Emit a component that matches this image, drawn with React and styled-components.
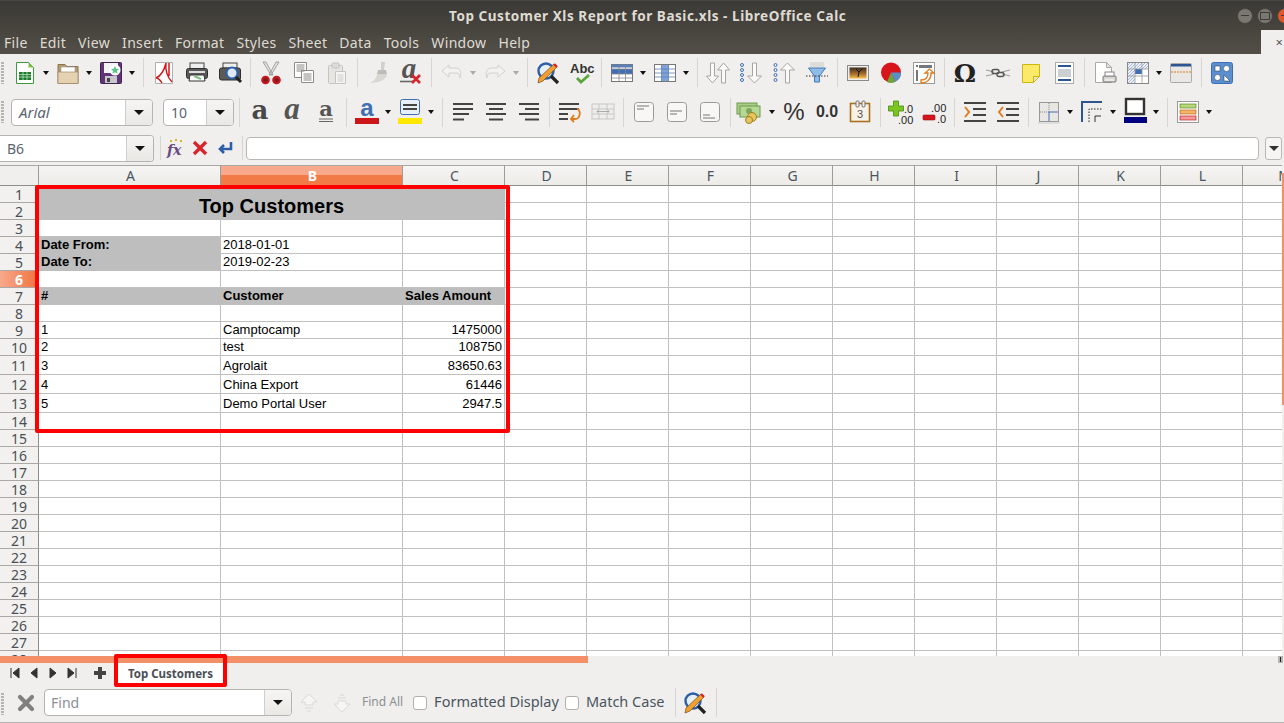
import React from "react";
import styled, { createGlobalStyle } from "styled-components";

const GlobalStyle = createGlobalStyle`
  html, body { margin: 0; padding: 0; background: #f0efed; }
  * { box-sizing: border-box; }
`;

const UI_FONT = `"Noto Sans", "Open Sans", sans-serif`;
const CELL_FONT = `"Liberation Sans", Arial, sans-serif`;

const Window = styled.div`
  position: relative;
  width: 1284px;
  height: 723px;
  overflow: hidden;
  display: flex;
  flex-direction: column;
  font-family: ${UI_FONT};
  background: #f0efed;
`;

const TitleBar = styled.div`
  height: 30px;
  flex: none;
  display: flex;
  align-items: center;
  padding-left: 449px;
  background: linear-gradient(#3a3935, #48453f);
  border-top: 1px solid #4a4843;
  overflow: hidden;
`;

const Title = styled.div`
  font-size: 13.5px;
  font-weight: 700;
  color: #dfdbd2;
  white-space: nowrap;
  letter-spacing: 0.55px;
`;

const WinControls = styled.div`
  margin-left: auto;
  margin-right: -9px;
  display: flex;
  gap: 4px;
`;

const WinButton = styled.div`
  width: 16px;
  height: 16px;
  border-radius: 50%;
  background: ${(p) => (p.$close ? "#e0582a" : "#7a7771")};
  border: 1px solid #45433e;
  display: flex;
  align-items: center;
  justify-content: center;
  &::after {
    content: "";
    width: 8px;
    height: ${(p) => (p.$box ? "6px" : "0")};
    border: 1px solid #3b3a36;
    border-width: ${(p) => (p.$box ? "1px" : "1px 0 0")};
  }
`;

const MenuBar = styled.div`
  height: 24px;
  flex: none;
  display: flex;
  align-items: center;
  background: linear-gradient(#48453f, #534f48);
  padding-left: 4px;
  gap: 12px;
`;

const MenuItem = styled.span`
  font-size: 14px;
  color: #dfdbd2;
  letter-spacing: 0.33px;
`;

const CloseDoc = styled.div`
  margin-left: auto;
  width: 23px;
  height: 24px;
  background: #f0efed;
  color: #555;
  font-size: 13px;
  text-align: right;
  padding-right: 1px;
  line-height: 24px;
`;

const Toolbar = styled.div`
  height: ${(p) => p.$h}px;
  flex: none;
  position: relative;
  display: flex;
  align-items: center;
  padding: 0 0 ${(p) => p.$bottom ?? 0}px ${(p) => p.$pad ?? 8}px;
`;

const Grip = styled.div`
  position: absolute;
  left: 1px;
  top: 50%;
  transform: translateY(-50%);
  width: 3px;
  height: 22px;
  background: repeating-linear-gradient(#b5b4b1 0 2px, transparent 2px 3px);
`;

const ToolButton = styled.div`
  width: ${(p) => p.$w ?? 33}px;
  height: 26px;
  flex: none;
  display: flex;
  align-items: center;
  justify-content: center;
  svg { display: block; overflow: visible; }
`;

const Arrow = styled.div`
  width: 10px;
  flex: none;
  display: flex;
  justify-content: center;
  &::after {
    content: "";
    border: 3.5px solid transparent;
    border-top: 4px solid ${(p) => (p.$faded ? "#aaa" : "#111")};
    border-bottom: 0;
  }
`;

const Sep = styled.div`
  width: 1px;
  height: ${(p) => p.$h ?? 29}px;
  flex: none;
  margin: 0 3px 0 ${(p) => p.$ml ?? 4}px;
  background: #d6d5d2;
  ${Arrow} + & { margin-left: 6px; }
`;

const Combo = styled.div`
  height: ${(p) => p.$h || 27}px;
  width: ${(p) => p.$w}px;
  flex: none;
  margin: ${(p) => p.$m || "0"};
  display: flex;
  background: #fff;
  border: 1px solid #b5b4b1;
  border-radius: 4px;
  ${(p) => p.$flush && "border-left: 0; border-radius: 0 4px 4px 0;"}
  overflow: hidden;
`;

const ComboText = styled.div`
  flex: 1;
  padding-left: ${(p) => p.$pad || 7}px;
  font-size: ${(p) => p.$size || 14}px;
  line-height: 25px;
  color: ${(p) => p.$color || "#5a6470"};
  font-style: ${(p) => (p.$italic ? "italic" : "normal")};
`;

const ComboButton = styled.div`
  width: 27px;
  flex: none;
  display: flex;
  align-items: center;
  justify-content: center;
  border-left: 1px solid #cfcecb;
  background: linear-gradient(#f6f5f3, #e9e8e5);
  &::after {
    content: "";
    border: 5px solid transparent;
    border-top: 5px solid #111;
    border-bottom: 0;
  }
`;

const FormulaInput = styled.div`
  width: 1013px;
  height: 23px;
  flex: none;
  background: #fff;
  border: 1px solid #b9b8b5;
  border-radius: 4px;
`;

const FormulaDrop = styled.div`
  width: 17px;
  height: 23px;
  flex: none;
  margin-left: 6px;
  display: flex;
  align-items: center;
  justify-content: center;
  background: #f6f5f3;
  border: 1px solid #b9b8b5;
  border-radius: 3px;
  &::after {
    content: "";
    border: 5px solid transparent;
    border-top: 5px solid #333;
    border-bottom: 0;
  }
`;

const SheetArea = styled.div`
  position: relative;
  height: 491px;
  flex: none;
  display: flex;
  overflow: hidden;
  background: #fff;
`;

const Grid = styled.div`
  width: 1282px;
  flex: none;
  display: grid;
  grid-template-columns: 39px 182px 182px 102px repeat(10, 82px);
  grid-template-rows: ${(p) => p.$rows};
  overflow: hidden;
`;

const ColHead = styled.div`
  display: flex;
  align-items: center;
  justify-content: center;
  padding-left: 2px;
  font-size: 14px;
  color: ${(p) => (p.$active ? "#fff" : "#4a5560")};
  font-weight: ${(p) => (p.$active ? 700 : 400)};
  border-top: 1px solid #a9a8a5;
  border-bottom: 1px solid #8f8e8b;
  border-right: 1px solid #9c9b98;
  background: ${(p) =>
    p.$active
      ? "linear-gradient(#f8a98c 0 50%, #f27a47 50%)"
      : "linear-gradient(#f6f5f3, #ecebe8)"};
`;

const Corner = styled(ColHead)`
  background: #f0efed;
`;

const RowHead = styled.div`
  display: flex;
  align-items: center;
  justify-content: center;
  font-size: 14px;
  color: ${(p) => (p.$active ? "#fff" : "#4a4f55")};
  font-weight: ${(p) => (p.$active ? 700 : 400)};
  border-right: 1px solid #8f8e8b;
  border-bottom: 1px solid #a9a8a5;
  background: ${(p) =>
    p.$active ? "linear-gradient(90deg, #f8a98c, #f0743f)" : "#f2f1ef"};
`;

const Cell = styled.div`
  display: flex;
  align-items: flex-end;
  justify-content: ${(p) => (p.$right ? "flex-end" : "flex-start")};
  padding: 0 2px 1px 2px;
  font-family: ${CELL_FONT};
  font-size: 13px;
  font-weight: ${(p) => (p.$bold ? 700 : 400)};
  color: #000;
  white-space: nowrap;
  background: ${(p) => (p.$gray ? "#bebebe" : "#fff")};
  border-right: 1px solid ${(p) => (p.$gray ? "#bebebe" : "#c0c0c0")};
  border-bottom: 1px solid ${(p) => (p.$gray ? "#bebebe" : "#c0c0c0")};
`;

const TitleCell = styled(Cell)`
  grid-column: span 3;
  grid-row: span 2;
  justify-content: center;
  font-size: 20px;
  font-weight: 700;
  background: #bebebe;
  border-color: #bebebe;
`;

const RedFrame = styled.div`
  position: absolute;
  left: 35px;
  top: 20px;
  width: 475px;
  height: 248px;
  border: 4px solid #fe0000;
  border-radius: 2px;
`;

const VScroll = styled.div`
  width: 2px;
  flex: none;
  background: #f0efed;
`;

const VThumb = styled.div`
  margin-top: 8px;
  height: 232px;
  background: #f39068;
`;

const SheetBar = styled.div`
  position: relative;
  height: 30px;
  flex: none;
  display: flex;
  flex-direction: column;
`;

const HScroll = styled.div`
  height: 7px;
  flex: none;
  display: flex;
  justify-content: space-between;
  padding-right: 1px;
`;

const HThumb = styled.div`
  width: 588px;
  background: #f39068;
`;

const SplitHandle = styled.div`
  width: 5px;
  height: 7px;
  background: #b5b4b1;
  display: flex;
  justify-content: center;
  &::after {
    content: "";
    width: 1px;
    height: 5px;
    margin-top: 1px;
    background: #222;
  }
`;

const TabRow = styled.div`
  flex: 1;
  display: flex;
  align-items: center;
  padding-left: 5px;
`;

const NavButton = styled.div`
  width: 19px;
  flex: none;
  display: flex;
  justify-content: center;
  margin: 0 0 3px ${(p) => p.$ml || 0}px;
  svg { display: block; }
`;

const Tab = styled.div`
  width: 107px;
  height: 20px;
  margin: 0 0 3px 8px;
  flex: none;
  display: flex;
  align-items: center;
  justify-content: center;
  background: #fff;
  font-size: 11.5px;
  font-weight: 700;
  color: #4a4f55;
`;

const TabFrame = styled.div`
  position: absolute;
  left: 114px;
  top: -2px;
  width: 113px;
  height: 33px;
  border: 4px solid #fe0000;
  border-radius: 2px;
`;

const FindAll = styled.span`
  font-size: 12px;
  color: #8a8f94;
  margin: 0 10px 2px 4px;
`;

const Check = styled.span`
  width: 14px;
  height: 14px;
  flex: none;
  background: #fff;
  border: 1px solid #b0afac;
  border-radius: 3px;
`;

const CheckLabel = styled.span`
  font-size: 14.5px;
  color: #4a5560;
  margin: 0 6px 3px 7px;
  white-space: nowrap;
`;

const FindBar = styled(Toolbar)`
  border-bottom: 1px solid #b5b4b1;
`;

const Svg = ({ w = 24, h = 24, children }) => (
  <svg width={w} height={h} viewBox={`0 0 ${w} ${h}`}>{children}</svg>
);

const lines = (x, ys, w, color = "#555", sw = 1) =>
  ys.map((y, i) => (
    <path key={i} d={`M${x} ${y}h${w}`} stroke={color} strokeWidth={sw} />
  ));

const icons = {
  newCalc: (
    <>
      <path d="M3.5 1.5h12l5 5v16h-17z" fill="#fff" stroke="#3f9a3f" />
      <path d="M15.5 1.5l5 5h-5z" fill="#7cc142" />
      <rect x="6" y="11" width="12" height="8" fill="#1c7c2c" />
      <path d="M6 13.5h12M6 16h12M10 11v8M14 11v8" stroke="#cfe8cf" strokeWidth=".7" />
    </>
  ),
  open: (
    <>
      <path d="M2 3.5h7l2 2h11v17H2z" fill="#b89c72" stroke="#8a7252" />
      <rect x="5" y="6" width="14" height="6" fill="#fff" stroke="#999" strokeWidth=".6" />
      <path d="M2 11h20v11.5H2z" fill="#e3d1b1" stroke="#a38a63" strokeWidth=".7" />
    </>
  ),
  save: (
    <>
      <rect x="1.5" y="1.5" width="21" height="21" rx="1" fill="#5f3578" stroke="#3f2352" />
      <rect x="5" y="2" width="14" height="10" fill="#f4f4f4" />
      <rect x="6" y="15" width="12" height="7" fill="#c9c5cc" />
      <rect x="8" y="17" width="3" height="4" fill="#444" />
      <circle cx="16" cy="9" r="5.5" fill="#fff" />
      <path d="M16 5l1.2 2.7 2.9.3-2.2 1.9.7 2.9-2.6-1.5-2.6 1.5.7-2.9-2.2-1.9 2.9-.3z" fill="#5ec48a" />
    </>
  ),
  pdf: (
    <>
      <path d="M3.5 1.5h17v21h-17z" fill="#fff" stroke="#b0b0b0" />
      <path d="M14 2c-2 8-5 13-10 15M14 2c-1 6 1 14 6 19M4 17c3 0 4 2 6 5M17 2v13" fill="none" stroke="#d0191f" strokeWidth="1.5" />
    </>
  ),
  print: (
    <>
      <rect x="5" y="2" width="14" height="6" fill="#eee" stroke="#444" />
      <rect x="1.5" y="7.5" width="21" height="10" rx="2" fill="#5a5a5a" stroke="#2e2e2e" />
      <rect x="4" y="10" width="16" height="2" fill="#ddd" />
      <path d="M5 14h14l1 6H4z" fill="#fff" stroke="#333" />
      <path d="M9 15l7 3" stroke="#7fbf7f" strokeWidth="2" />
    </>
  ),
  preview: (
    <>
      <rect x="5" y="2" width="14" height="5" fill="#eee" stroke="#444" />
      <rect x="1.5" y="7" width="21" height="12" rx="2" fill="#5a5a5a" stroke="#2e2e2e" />
      <circle cx="14" cy="12" r="5.5" fill="#dfe9f5" stroke="#2d5ea8" strokeWidth="2" />
      <path d="M18 16l5 5" stroke="#222" strokeWidth="3" />
    </>
  ),
  cut: (
    <>
      <path d="M4 1l8 13 2 0L7 1zM20 1l-8 13-2 0L17 1z" fill="#e4e3e0" stroke="#8f8f8f" strokeWidth=".8" />
      <circle cx="6.5" cy="19" r="3.2" fill="#7a1c20" stroke="#c8161d" strokeWidth="2.2" />
      <circle cx="17.5" cy="19" r="3.2" fill="#7a1c20" stroke="#c8161d" strokeWidth="2.2" />
    </>
  ),
  copy: (
    <>
      <path d="M2.5 1.5h12v15h-12z" fill="#fff" stroke="#8a8a8a" />
      <path d="M9.5 9.5h12v12h-12z" fill="#fff" stroke="#8a8a8a" />
      {lines(4.5, [4, 6, 8, 10], 8, "#888")}
      {lines(11.5, [13, 15, 17, 19], 8, "#888")}
    </>
  ),
  paste: (
    <>
      <rect x="3.5" y="4.5" width="14" height="18" rx="1" fill="#e6e5e2" stroke="#c5c4c1" />
      <rect x="7" y="2" width="7" height="5" rx="1" fill="#dcdbd8" stroke="#c5c4c1" />
      <path d="M10.5 10.5h10v12h-10z" fill="#f6f5f3" stroke="#c5c4c1" />
      {lines(12.5, [14, 16, 18, 20], 6, "#cfcecb")}
    </>
  ),
  clone: (
    <>
      <path d="M15 1h4l-1 8h-3z" fill="#d0cfcc" />
      <path d="M12 9h8l1 4H11z" fill="#bdbcb9" />
      <path d="M11 13h10c0 5-7 9-17 9 4-2 7-5 7-9z" fill="#d8d7d4" />
    </>
  ),
  clear: (
    <>
      <text x="10" y="17" textAnchor="middle" fontFamily="Liberation Serif" fontSize="29" fontWeight="700" fontStyle="italic" fill="#555">a</text>
      <path d="M1 20.5h13" stroke="#666" strokeWidth="1.6" />
      <path d="M13 14l8 8M21 14l-8 8" stroke="#d8232a" strokeWidth="2.6" />
    </>
  ),
  undo: (
    <path d="M9 4l-7 6 7 6v-4h7c3 0 4 2 4 5 2-6 0-10-5-10H9z" fill="#f3f2f0" stroke="#d2d1ce" />
  ),
  redo: (
    <path d="M15 4l7 6-7 6v-4H8c-3 0-4 2-4 5-2-6 0-10 5-10h6z" fill="#f3f2f0" stroke="#d2d1ce" />
  ),
  find: (
    <>
      <circle cx="10" cy="10" r="7.5" fill="#e6eef8" stroke="#2d5ea8" strokeWidth="2.4" />
      <path d="M15 15l7 7" stroke="#222" strokeWidth="3.2" />
      <path d="M3 17L18 3l3 3L7 20l-5 2z" fill="#f0a030" stroke="#7a4a10" strokeWidth=".7" />
      <path d="M18 3l3 3" stroke="#d8232a" strokeWidth="2.4" />
    </>
  ),
  spell: (
    <>
      <text x="1" y="12" fontFamily="Liberation Sans" fontSize="13" fontWeight="700" fill="#333">Abc</text>
      <path d="M8 17l4 4 8-7" fill="none" stroke="#5aa63c" strokeWidth="2.8" />
    </>
  ),
  rowTable: (
    <>
      <rect x="1.5" y="3.5" width="21" height="17" fill="#fff" stroke="#777" />
      <rect x="2" y="8" width="20" height="5" fill="#3e6fb5" />
      <path d="M2 8h20M2 13h20M2 17h20M9 4v16M15.5 4v16" stroke="#888" strokeWidth=".8" />
      <rect x="1.5" y="3.5" width="21" height="3" fill="#5b7fb5" />
    </>
  ),
  colTable: (
    <>
      <rect x="1.5" y="3.5" width="21" height="17" fill="#fff" stroke="#777" />
      <rect x="8.5" y="4" width="7" height="16" fill="#7fa3d6" />
      <path d="M2 8h20M2 12h20M2 16h20M8.5 4v16M15.5 4v16" stroke="#5b7fb5" strokeWidth=".8" />
    </>
  ),
  sort: (
    <>
      <path d="M4.5 2h4v13h4l-6 7-6-7h4z" fill="#fafaf9" stroke="#a5a5a3" />
      <path d="M15.5 22h4V9h4l-6-7-6 7h4z" fill="#fafaf9" stroke="#a5a5a3" />
    </>
  ),
  sortAsc: (
    <>
      {[4, 9, 14, 19].map((y) => <circle key={y} cx="3" cy={y} r="1.5" fill="none" stroke="#3e6fb5" />)}
      <path d="M13.5 2h4v13h5l-7 7-7-7h5z" fill="#fafaf9" stroke="#a5a5a3" />
    </>
  ),
  sortDesc: (
    <>
      {[4, 9, 14, 19].map((y) => <circle key={y} cx="3.5" cy={y} r="1.5" fill="none" stroke="#3e6fb5" />)}
      <path d="M13.5 22h4V9h5l-7-7-7 7h5z" fill="#fafaf9" stroke="#a5a5a3" />
    </>
  ),
  filter: (
    <>
      <rect x="5" y="1" width="14" height="5" fill="#cfcecb" opacity=".6" />
      <path d="M3.5 7h17l-6 8v6h-5v-6z" fill="#8fbce8" stroke="#3e78b5" />
      <path d="M1 15h22" stroke="#333" strokeDasharray="1.5 1.5" />
    </>
  ),
  image: (
    <>
      <defs>
        <linearGradient id="sunset" x1="0" y1="0" x2="0" y2="1">
          <stop offset="0" stopColor="#3d2a1c" />
          <stop offset=".6" stopColor="#a8702c" />
          <stop offset="1" stopColor="#f7c04a" />
        </linearGradient>
      </defs>
      <rect x="1.5" y="4.5" width="21" height="15" fill="#eee" stroke="#8a8a88" />
      <rect x="3.500" y="6.500" width="17" height="11" fill="url(#sunset)" />
      <path d="M12 16l1-5-3-3M13 11l3-3" fill="none" stroke="#1a120a" />
    </>
  ),
  chart: (
    <>
      <circle cx="12" cy="11.5" r="10" fill="#d8141c" />
      <path d="M12 11.5L22 11.5A10 10 0 0 1 16 21z" fill="#5b8fc5" />
      <path d="M12 11.5L16 21A10 10 0 0 1 8 21z" fill="#6aa83a" />
    </>
  ),
  pivot: (
    <>
      <rect x="1.5" y="1.5" width="21" height="21" fill="#fff" stroke="#999" />
      <rect x="7" y="4" width="13" height="3" fill="#777" />
      <rect x="4" y="4" width="2" height="2" fill="#777" />
      <rect x="4" y="9" width="2" height="11" fill="#777" />
      <path d="M9 19c5 0 7-2 7-7h-3l4.5-4 4.5 4h-3c0 7-4 10-10 10z" fill="#fff" stroke="#e07a1f" strokeWidth="1.3" />
    </>
  ),
  omega: (
    <text x="12" y="21" textAnchor="middle" fontFamily="DejaVu Serif" fontSize="25" fontWeight="700" fill="#222">Ω</text>
  ),
  link: (
    <>
      <path d="M0 9l8 2M0 15l8-2M24 9l-8 2M24 15l-8-2" stroke="#999" />
      <rect x="6" y="8.500" width="7" height="4" rx="2" fill="none" stroke="#555" strokeWidth="1.4" />
      <rect x="11" y="11.500" width="7" height="4" rx="2" fill="none" stroke="#555" strokeWidth="1.4" />
    </>
  ),
  note: (
    <>
      <path d="M3.5 3.5h17v12l-6 6h-11z" fill="#fbe96a" stroke="#cdb70a" />
      <path d="M20.5 15.5h-6v6z" fill="#e8e6c8" stroke="#cdb70a" />
    </>
  ),
  headers: (
    <>
      <rect x="3.5" y="1.5" width="18" height="21" fill="#fff" stroke="#aaa" />
      <rect x="6" y="4" width="13" height="2" fill="#2d5590" />
      {lines(6, [9, 11, 13, 15], 13, "#9aa0a6")}
      <rect x="6" y="18" width="13" height="2" fill="#2d5590" />
    </>
  ),
  printArea: (
    <>
      <path d="M2.5 1.5h11l5 5v15h-16z" fill="#fff" stroke="#aaa" />
      <path d="M13.5 1.5l5 5h-5z" fill="#e4e4e2" stroke="#aaa" />
      <rect x="10" y="15" width="13" height="6" rx="1" fill="#d8d7d4" stroke="#777" />
      <rect x="12" y="11" width="9" height="4" fill="#fff" stroke="#888" />
      <path d="M12 19h9" stroke="#fff" />
    </>
  ),
  freeze: (
    <>
      <defs>
        <pattern id="hatch" width="3" height="3" patternUnits="userSpaceOnUse">
          <rect width="3" height="3" fill="#eef2f8" />
          <path d="M0 3l3-3" stroke="#8fa9cf" strokeWidth=".8" />
        </pattern>
      </defs>
      <rect x="1.5" y="1.5" width="21" height="21" fill="#fff" stroke="#888" />
      <path d="M2 2h20v6H9v14H2z" fill="url(#hatch)" />
      <rect x="9" y="8" width="7" height="5" fill="#3e6fb5" />
      <path d="M2 8h20M2 15h20M9 2v20M16 2v20" stroke="#9a9a9a" strokeWidth=".8" />
    </>
  ),
  headerFooter: (
    <>
      <rect x="1.5" y="2.5" width="21" height="19" rx="1" fill="#e8e7e4" stroke="#aaa" />
      <rect x="2" y="3" width="20" height="2.5" fill="#2d5590" />
      <path d="M2 11h20" stroke="#e07a1f" strokeDasharray="2 1" />
    </>
  ),
  shapes: (
    <>
      <rect x="1.5" y="1.5" width="21" height="21" rx="2" fill="#5b8fd0" stroke="#3e6fb5" />
      <rect x="5" y="5" width="5" height="5" fill="#fff" stroke="#234" strokeWidth=".5" />
      <circle cx="16.5" cy="7.5" r="3" fill="#fff" stroke="#234" strokeWidth=".5" />
      <circle cx="7.5" cy="16.5" r="3" fill="#fff" stroke="#234" strokeWidth=".5" />
      <path d="M14 14l6 6h-6z" fill="#fff" stroke="#234" strokeWidth=".5" />
    </>
  ),
  bold: (
    <text x="12" y="19" textAnchor="middle" fontFamily="DejaVu Serif" fontSize="26" fontWeight="700" fill="#484848">a</text>
  ),
  italic: (
    <text x="11" y="19" textAnchor="middle" fontFamily="Liberation Serif" fontSize="31" fontWeight="700" fontStyle="italic" fill="#555">a</text>
  ),
  underline: (
    <>
      <text x="12" y="16" textAnchor="middle" fontFamily="DejaVu Serif" fontSize="21" fontWeight="700" fill="#555">a</text>
      <path d="M5 19h14M5 21.500h14" stroke="#666" />
    </>
  ),
  fontColor: (
    <>
      <text x="12" y="16" textAnchor="middle" fontFamily="Liberation Sans" fontSize="24" fontWeight="700" fill="#3e6fb5">a</text>
      <rect x="0" y="18" width="24" height="6" fill="#cc1518" />
    </>
  ),
  bgColor: (
    <>
      <rect x="2.5" y="-.5" width="19" height="15" rx="2" fill="#e8eef6" stroke="#3e6fb5" />
      <path d="M5 5h14M5 9h14" stroke="#444" strokeWidth="2" />
      <rect x="0" y="18" width="24" height="6" fill="#ffe800" />
    </>
  ),
  left: (
    <>
      {lines(2, [4, 9], 20, "#444", 2)}
      {lines(2, [14], 16, "#444", 2)}
      {lines(2, [19.5], 11, "#444", 2)}
    </>
  ),
  center: (
    <>
      {lines(2, [4, 14], 20, "#444", 2)}
      {lines(5, [9, 19.5], 14, "#444", 2)}
    </>
  ),
  right: (
    <>
      {lines(2, [4, 14], 20, "#444", 2)}
      {lines(8, [9, 19.5], 14, "#444", 2)}
    </>
  ),
  wrap: (
    <>
      {lines(1, [4, 9], 20, "#444", 2)}
      {lines(1, [14, 19], 9, "#444", 2)}
      <path d="M19 9c4 0 4 10-2 10h-3M16 15l-3 4 3 3" fill="none" stroke="#e07a1f" strokeWidth="1.8" />
    </>
  ),
  merge: (
    <>
      <rect x="1" y="4" width="22" height="15" fill="#eee" stroke="#c8c7c4" />
      <path d="M1 9h22M1 14h22M8 4v5M16 4v5M8 14v5M16 14v5" stroke="#c8c7c4" />
      <path d="M6 11.5h12M6 11.5l2-2M6 11.5l2 2M18 11.5l-2-2M18 11.5l-2 2" stroke="#aaa" />
    </>
  ),
  alignTop: <><rect x="2.5" y="2.5" width="19" height="19" rx="3" fill="#f8f7f5" stroke="#999" />{lines(5, [6], 12, "#777")}{lines(5, [9], 7, "#777")}</>,
  alignMid: <><rect x="2.5" y="2.5" width="19" height="19" rx="3" fill="#f8f7f5" stroke="#999" />{lines(5, [11], 12, "#777")}{lines(5, [14], 7, "#777")}</>,
  alignBot: <><rect x="2.5" y="2.5" width="19" height="19" rx="3" fill="#f8f7f5" stroke="#999" />{lines(5, [15], 7, "#777")}{lines(5, [18], 12, "#777")}</>,
  money: (
    <>
      <rect x="-2" y="3" width="20" height="11" fill="#a9cf85" stroke="#6f9a50" />
      <rect x="1" y="6" width="20" height="11" fill="#b7d895" stroke="#6f9a50" />
      <circle cx="10" cy="11" r="3" fill="#7ca85c" />
      <circle cx="13" cy="17" r="4.5" fill="#e6c65c" stroke="#a08020" />
      <circle cx="10" cy="20" r="3.5" fill="#e6c65c" stroke="#a08020" />
    </>
  ),
  percent: (
    <text x="12" y="20" textAnchor="middle" fontFamily="Liberation Sans" fontSize="24" fill="#333">%</text>
  ),
  number: (
    <text x="12" y="17" textAnchor="middle" fontFamily="Liberation Sans" fontSize="16" fontWeight="700" fill="#333">0.0</text>
  ),
  date: (
    <>
      <rect x="2.5" y="3.5" width="19" height="18" fill="#f8f3e6" stroke="#a8701f" strokeWidth="1.6" />
      <rect x="8" y="1" width="3" height="6" rx="1" fill="#eee" stroke="#777" />
      <rect x="14" y="1" width="3" height="6" rx="1" fill="#eee" stroke="#777" />
      <text x="12" y="18" textAnchor="middle" fontFamily="Liberation Sans" fontSize="11" fill="#555">3</text>
    </>
  ),
  addDec: (
    <>
      <path d="M4.5 1h5v5h5v5h-5v5h-5v-5h-5V6h5z" fill="#7ac520" stroke="#4a8a10" strokeWidth=".8" />
      <text x="15" y="13" fontFamily="Liberation Sans" fontSize="11" fill="#222">.0</text>
      <text x="9" y="24" fontFamily="Liberation Sans" fontSize="11" fill="#222">.00</text>
    </>
  ),
  delDec: (
    <>
      <text x="9" y="12" fontFamily="Liberation Sans" fontSize="11" fill="#222">.00</text>
      <rect x="1" y="15" width="12" height="5" rx="1" fill="#d8141c" stroke="#901015" strokeWidth=".6" />
      <text x="15" y="23" fontFamily="Liberation Sans" fontSize="11" fill="#222">.0</text>
    </>
  ),
  indentMore: (
    <>
      {lines(1, [3, 21], 22, "#444", 2)}
      {lines(10, [9, 15], 13, "#444", 2)}
      <path d="M2 7l4 5-4 5" fill="none" stroke="#e07a1f" strokeWidth="2" />
    </>
  ),
  indentLess: (
    <>
      {lines(1, [3, 21], 22, "#444", 2)}
      {lines(10, [9, 15], 13, "#444", 2)}
      <path d="M7 7l-4 5 4 5" fill="none" stroke="#e07a1f" strokeWidth="2" />
    </>
  ),
  borders: (
    <>
      <rect x="2.5" y="2.5" width="19" height="19" fill="#e8e7e4" stroke="#999" />
      <path d="M12 3v9M3 12h9" stroke="#888" strokeDasharray="1 1" />
      <path d="M12 21v-9h9" fill="none" stroke="#3e6fb5" />
      <path d="M1 23h22" stroke="#ccc" />
    </>
  ),
  borderStyle: (
    <>
      <path d="M2 22V2h20" fill="none" stroke="#2d5590" strokeWidth="2" />
      <path d="M9 22V9h13" fill="none" stroke="#222" strokeDasharray="1.5 1.5" />
      <path d="M15 22v-6h6" fill="none" stroke="#333" />
    </>
  ),
  borderColor: (
    <>
      <rect x="3" y="-1" width="18" height="15" fill="#fff" stroke="#333" strokeWidth="2.4" />
      <rect x="1" y="17" width="23" height="6" fill="#000080" />
    </>
  ),
  conditional: (
    <>
      <rect x="1.5" y="1.5" width="21" height="21" fill="#fff" stroke="#999" />
      <rect x="4" y="4" width="16" height="4" fill="#b6d77a" stroke="#5a8a20" strokeWidth=".7" />
      <rect x="4" y="10" width="16" height="4" fill="#f4b36c" stroke="#c06a10" strokeWidth=".7" />
      <rect x="4" y="16" width="16" height="4" fill="#f49a9a" stroke="#c02020" strokeWidth=".7" />
    </>
  ),
  fx: (
    <>
      <path d="M6 5h2M11 4h2M16 5h2" stroke="#e0b030" strokeWidth="2" />
      <text x="3" y="19" fontFamily="DejaVu Serif" fontSize="14" fontWeight="700" fontStyle="italic" fill="#6a4a86">fx</text>
    </>
  ),
  cancel: (
    <path d="M6 6l12 12M18 6L6 18" stroke="#d8232a" strokeWidth="3.2" />
  ),
  accept: (
    <path d="M18 6v7H8M11 9l-4 4 4 4" fill="none" stroke="#2d5ea8" strokeWidth="2.6" />
  ),
  closeFind: (
    <path d="M5 6l12 12M17 6L5 18" stroke="#808080" strokeWidth="4.2" strokeLinecap="round" />
  ),
  findUp: (
    <path d="M12 3l8 8h-4v3h-8v-3H4zM8 17h8M10 20h4" fill="#f6f5f3" stroke="#dad9d6" />
  ),
  findDown: (
    <path d="M12 21l8-8h-4v-3h-8v3H4zM8 7h8M10 4h4" fill="#f6f5f3" stroke="#dad9d6" />
  ),
};

const Tool = ({ name, w }) => (
  <ToolButton $w={w}>
    <Svg>{icons[name]}</Svg>
  </ToolButton>
);

// "|" is a separator, "v" a dropdown arrow, anything else an icon name
const renderTools = (list) =>
  list.split(" ").map((t, i) => {
    if (t === "|") return <Sep key={i} />;
    if (t === "v") return <Arrow key={i} />;
    if (t === "-") return <Arrow key={i} $faded />;
    return <Tool key={i} name={t} />;
  });

const MENU = ["File", "Edit", "View", "Insert", "Format", "Styles", "Sheet", "Data", "Tools", "Window", "Help"];
const TOP_TOOLS =
  "newCalc v open v save v | pdf print preview | cut copy paste | clone clear | undo - redo - | find spell | rowTable v colTable v | sort sortAsc sortDesc filter | image chart pivot | omega link note headers | printArea freeze v headerFooter | shapes";
const FORMAT_TOOLS =
  "| bold italic underline | fontColor v bgColor v | left center right | wrap merge | alignTop alignMid alignBot | money v percent number date | addDec delDec | indentMore indentLess | borders v borderStyle v borderColor v | conditional v";

const COLUMNS = ["A", "B", "C", "D", "E", "F", "G", "H", "I", "J", "K", "L", "M"];
const ROW_HEIGHTS = [17, 17, 17, 17, 17, 17, 17, 17, 17, 17, 19, 19, 19, 17];
const gridRows = ["21px", ...ROW_HEIGHTS.map((h) => `${h}px`), "repeat(14, 17px)"].join(" ");

// sheet contents, keyed by row number: [A, B, C]
const CONTENT = {
  4: [{ t: "Date From:", bold: true, gray: true }, { t: "2018-01-01" }, {}],
  5: [{ t: "Date To:", bold: true, gray: true }, { t: "2019-02-23" }, {}],
  7: [
    { t: "#", bold: true, gray: true },
    { t: "Customer", bold: true, gray: true },
    { t: "Sales Amount", bold: true, gray: true },
  ],
  9: [{ t: "1" }, { t: "Camptocamp" }, { t: "1475000", right: true }],
  10: [{ t: "2" }, { t: "test" }, { t: "108750", right: true }],
  11: [{ t: "3" }, { t: "Agrolait" }, { t: "83650.63", right: true }],
  12: [{ t: "4" }, { t: "China Export" }, { t: "61446", right: true }],
  13: [{ t: "5" }, { t: "Demo Portal User" }, { t: "2947.5", right: true }],
};

const SheetRow = ({ n }) => {
  const data = CONTENT[n] || [{}, {}, {}];
  return (
    <>
      <RowHead $active={n === 6}>{n}</RowHead>
      {n === 1 && <TitleCell>Top Customers</TitleCell>}
      {n !== 1 && n !== 2 &&
        data.map((c, i) => (
          <Cell key={i} $bold={c.bold} $gray={c.gray} $right={c.right}>{c.t}</Cell>
        ))}
      {COLUMNS.slice(3).map((c) => <Cell key={c} />)}
    </>
  );
};

const navPaths = ["M2 1v10M10 1v10L4 6z", "M9 1v10L3 6z", "M3 1v10l6-5z", "M10 1v10M2 1v10l6-5z"];

export default function App() {
  const rowNumbers = Array.from({ length: 28 }, (_, i) => i + 1);
  return (
    <Window>
      <GlobalStyle />
      <TitleBar>
        <Title>Top Customer Xls Report for Basic.xls - LibreOffice Calc</Title>
        <WinControls>
          <WinButton />
          <WinButton $box />
          <WinButton $close />
        </WinControls>
      </TitleBar>
      <MenuBar>
        {MENU.map((m) => <MenuItem key={m}>{m}</MenuItem>)}
        <CloseDoc>×</CloseDoc>
      </MenuBar>

      <Toolbar $h={37}>
        <Grip />
        {renderTools(TOP_TOOLS)}
      </Toolbar>

      <Toolbar $h={42} $pad={11}>
        <Grip />
        <Combo $w={142}>
          <ComboText $italic $size={15}>Arial</ComboText>
          <ComboButton />
        </Combo>
        <Combo $w={71} $m="0 1px 0 10px">
          <ComboText>10</ComboText>
          <ComboButton />
        </Combo>
        {renderTools(FORMAT_TOOLS)}
      </Toolbar>

      <Toolbar $h={32} $pad={0} $bottom={2}>
        <Combo $w={154} $flush>
          <ComboText>B6</ComboText>
          <ComboButton />
        </Combo>
        <Sep $ml={6} $h={24} />
        <Tool name="fx" w={24} />
        <Tool name="cancel" w={24} />
        <Tool name="accept" w={25} />
        <Sep $ml={5} $h={24} />
        <FormulaInput />
        <FormulaDrop />
      </Toolbar>

      <SheetArea>
        <Grid $rows={gridRows}>
          <Corner />
          {COLUMNS.map((c) => <ColHead key={c} $active={c === "B"}>{c}</ColHead>)}
          {rowNumbers.map((n) => <SheetRow key={n} n={n} />)}
        </Grid>
        <VScroll><VThumb /></VScroll>
        <RedFrame />
      </SheetArea>

      <SheetBar>
        <HScroll>
          <HThumb />
          <SplitHandle />
        </HScroll>
        <TabRow>
          {navPaths.map((d) => (
            <NavButton key={d}>
              <svg width="12" height="12" viewBox="0 0 12 12"><path d={d} fill="#333" stroke="#333" /></svg>
            </NavButton>
          ))}
          <NavButton $ml={9}>
            <svg width="12" height="12" viewBox="0 0 12 12"><path d="M4 0h4v4h4v4H8v4H4V8H0V4h4z" fill="#444" /></svg>
          </NavButton>
          <Tab>Top Customers</Tab>
        </TabRow>
        <TabFrame />
      </SheetBar>

      <FindBar $h={37} $pad={10} $bottom={3}>
        <Grip />
        <Tool name="closeFind" w={34} />
        <Combo $w={248}>
          <ComboText $color="#8a8f94" $pad={6}>Find</ComboText>
          <ComboButton />
        </Combo>
        <Tool name="findUp" />
        <Tool name="findDown" />
        <FindAll>Find All</FindAll>
        <Check />
        <CheckLabel>Formatted Display</CheckLabel>
        <Check />
        <CheckLabel>Match Case</CheckLabel>
        <Sep />
        <Tool name="find" />
        <Sep />
      </FindBar>
    </Window>
  );
}
